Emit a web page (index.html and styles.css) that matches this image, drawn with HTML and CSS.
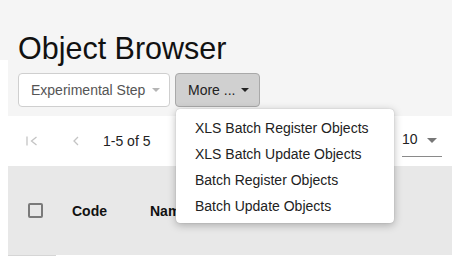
FILE: index.html
```html
<!DOCTYPE html>
<html>
<head>
<meta charset="utf-8">
<link rel="stylesheet" href="styles.css">
</head>
<body>
<div class="page">
  <div class="header"><h1 class="title">Object Browser</h1></div>
  <div class="main">
    <div class="toolbar">
      <button class="btn btn-select">Experimental Step <span class="caret caret-light"></span></button>
      <button class="btn btn-more">More ... <span class="caret caret-dark"></span></button>
    </div>
    <div class="pager">
      <div class="pager-left">
        <svg class="icon icon-first" width="14" height="14" viewBox="0 0 14 14"><path d="M2 2.5v9" stroke="#c4c4c4" stroke-width="1.3" fill="none"/><path d="M11.5 3L6.5 7l5 4" stroke="#c4c4c4" stroke-width="1.3" fill="none"/></svg>
        <svg class="icon icon-prev" width="10" height="14" viewBox="0 0 10 14"><path d="M7 3L3 7l4 4" stroke="#c4c4c4" stroke-width="1.3" fill="none"/></svg>
        <span class="range">1-5 of 5</span>
      </div>
      <div class="perpage">10 <span class="caret caret-mid"></span></div>
    </div>
    <div class="thead">
      <span class="checkbox"></span>
      <span class="th th-code">Code</span>
      <span class="th th-name">Name</span>
    </div>
    <div class="footline"></div>
  </div>
  <div class="menu">
    <div class="menu-item">XLS Batch Register Objects</div>
    <div class="menu-item">XLS Batch Update Objects</div>
    <div class="menu-item">Batch Register Objects</div>
    <div class="menu-item">Batch Update Objects</div>
  </div>
</div>
</body>
</html>
```

FILE: styles.css
```css
* { box-sizing: border-box; }
html, body {
  margin: 0;
  padding: 0;
  background: #ffffff;
  font-family: "Liberation Sans", Arial, sans-serif;
  overflow: hidden;
}
.page {
  position: relative;
  width: 452px;
  height: 261px;
  overflow: hidden;
}
.header {
  height: 60px;
  background: #f5f5f5;
  padding: 33px 0 0 18px;
}
.title {
  margin: 0;
  font-size: 30.5px;
  font-weight: normal;
  line-height: 30px;
  color: #111;
  position: relative;
  z-index: 1;
}
.main {
  margin-left: 8px;
}
.toolbar {
  height: 56px;
  background: #f5f5f5;
  padding: 13px 0 0 10px;
  display: flex;
  align-items: flex-start;
  gap: 5px;
}
.btn {
  height: 34px;
  border-radius: 4px;
  font-family: "Liberation Sans", Arial, sans-serif;
  font-size: 14px;
  display: flex;
  align-items: center;
  margin: 0;
}
.btn-select {
  width: 152px;
  background: #ffffff;
  border: 1px solid #cfcfcf;
  color: #555;
  padding: 0 0 0 12px;
  gap: 7px;
}
.btn-more {
  width: 85px;
  background: #d0d0d0;
  border: 1px solid #a9a9a9;
  color: #222;
  padding: 0 0 0 12px;
  gap: 6px;
}
.caret {
  display: inline-block;
  width: 0;
  height: 0;
  border-left: 4px solid transparent;
  border-right: 4px solid transparent;
  border-top: 4px solid #333;
}
.caret-light { border-top-color: #b5b5b5; }
.caret-dark { border-top-color: #222; }
.caret-mid { border-top-color: #777; border-left-width: 5px; border-right-width: 5px; border-top-width: 5px; }
.pager {
  height: 50px;
  background: #fff;
  display: flex;
  align-items: center;
  justify-content: space-between;
  padding: 0 10px 0 17px;
}
.pager-left {
  display: flex;
  align-items: center;
}
.icon { display: block; }
.icon-first { margin-right: 32px; }
.icon-prev { margin-right: 22px; }
.range {
  font-size: 14px;
  color: #222;
}
.perpage {
  width: 40px;
  height: 26px;
  margin-top: 6px;
  border-bottom: 1px solid #8a8a8a;
  font-size: 14px;
  color: #222;
  display: flex;
  align-items: flex-start;
  gap: 9px;
}
.perpage .caret { margin-top: 7px; }
.thead {
  height: 89px;
  background: #e8e8e8;
  display: flex;
  align-items: center;
  padding-left: 20px;
}
.checkbox {
  width: 15px;
  height: 15px;
  border: 2px solid #7a7a7a;
  border-radius: 2px;
  margin-right: 29px;
}
.th {
  font-size: 14px;
  font-weight: bold;
  color: #111;
}
.th-code { margin-right: 43px; }
.footline {
  width: 48px;
  height: 1px;
  background: #d6d6d6;
}
.menu {
  position: absolute;
  left: 176px;
  top: 109px;
  width: 218px;
  background: #fff;
  border-radius: 4px;
  box-shadow: 0 2px 8px rgba(0,0,0,0.28), 0 0 1px rgba(0,0,0,0.3);
  padding: 6px 0 4px 0;
  z-index: 5;
}
.menu-item {
  height: 26px;
  line-height: 26px;
  padding-left: 19px;
  font-size: 14px;
  color: #222;
  white-space: nowrap;
}
```
